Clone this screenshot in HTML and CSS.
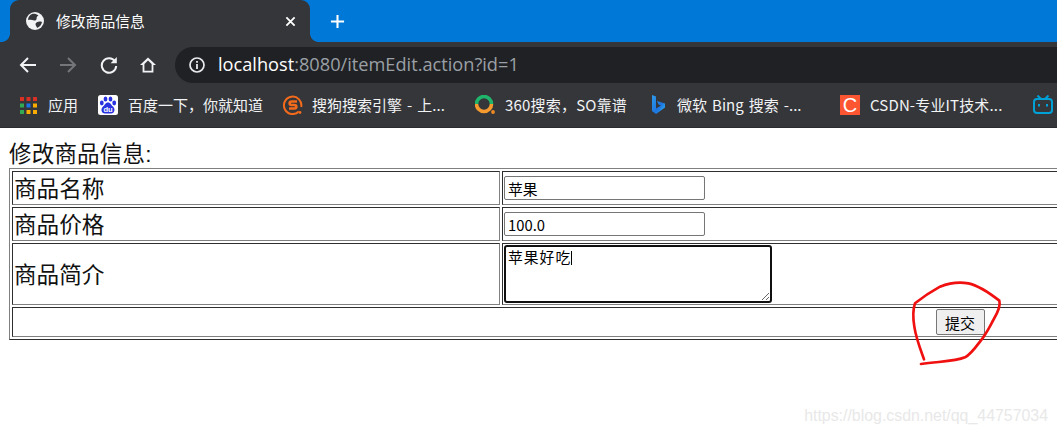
FILE: index.html
```html
<!DOCTYPE html>
<html lang="zh">
<head>
<meta charset="utf-8">
<title>修改商品信息</title>
<link rel="stylesheet" href="styles.css">
</head>
<body>
<header class="chrome">
  <div class="tabstrip">
    <div class="tab">
      <svg class="globe" viewBox="0 0 18 18"><circle cx="9" cy="9" r="9" fill="#f1f3f4"/><path d="M6 2C3.500 3.200 2 5.500 2 8C5 7 8 9.500 10 8C11.500 6.800 9.500 5 12.500 3.500C10.500 1.800 8 1.400 6 2Z M16 10C13 9 10 10 9.500 12C9.500 14 11 14.500 11 16C13.500 15 15.500 13 16 10Z" fill="#35363a"/></svg>
      <span class="tab-title">修改商品信息</span>
      <svg class="tab-close" viewBox="0 0 12 12"><path d="M1.500 1.500 10.500 10.500 M10.500 1.500 1.500 10.500" stroke="#fff" stroke-width="2"/></svg>
    </div>
    <svg class="new-tab" viewBox="0 0 16 16"><path d="M8 1V15M1 8H15" stroke="#fff" stroke-width="2.200"/></svg>
  </div>
  <div class="toolbar">
    <svg class="nav nav-back" viewBox="0 0 18 18"><path d="M17 9H2 M9 2 2 9 9 16" fill="none" stroke="#f1f3f4" stroke-width="2"/></svg>
    <svg class="nav nav-forward" viewBox="0 0 18 18"><path d="M1 9H16 M9 2 16 9 9 16" fill="none" stroke="#74767a" stroke-width="2"/></svg>
    <svg class="nav nav-reload" viewBox="0 0 18 18"><path d="M15 5.500A7.200 7.200 0 1 0 16.200 10" fill="none" stroke="#f1f3f4" stroke-width="2"/><path d="M16.800 1V7.200H10.600Z" fill="#f1f3f4"/></svg>
    <svg class="nav nav-home" viewBox="0 0 18 18"><path d="M9 1.500 1 9H3.600V16.500H14.400V9H17Z M5.400 8 9 4.500 12.600 8V14.700H5.400Z" fill="#f1f3f4" fill-rule="evenodd"/></svg>
    <div class="omnibox">
      <svg class="info" viewBox="0 0 16 16"><circle cx="8" cy="8" r="7" fill="none" stroke="#e8eaed" stroke-width="1.700"/><path d="M8 7V12 M8 4V5.800" stroke="#e8eaed" stroke-width="1.800"/></svg>
      <span class="url"><span class="host">localhost</span>:8080/itemEdit.action?id=1</span>
    </div>
  </div>
  <nav class="bookmarks">
    <a class="bm bm-apps">
      <svg class="ico" viewBox="0 0 17 17"><g fill="#d93025"><rect width="4" height="4"/><rect x="6.500" width="4" height="4"/><rect x="13" width="4" height="4"/></g><g fill="#34a853"><rect y="6.500" width="4" height="4"/><rect y="13" width="4" height="4"/></g><rect x="6.500" y="6.500" width="4" height="4" fill="#1a73e8"/><g fill="#f9ab00"><rect x="13" y="6.500" width="4" height="4"/><rect x="6.500" y="13" width="4" height="4"/><rect x="13" y="13" width="4" height="4"/></g></svg>
      <span class="bm-text">应用</span>
    </a>
    <a class="bm bm-baidu">
      <svg class="ico-lg" viewBox="0 0 20 20"><rect width="20" height="20" rx="2.500" fill="#fff"/><g fill="#2932e1"><ellipse cx="3.800" cy="8" rx="1.900" ry="2.400"/><ellipse cx="7.500" cy="4" rx="1.900" ry="2.500"/><ellipse cx="12.500" cy="4" rx="1.900" ry="2.500"/><ellipse cx="16.200" cy="8" rx="1.900" ry="2.400"/><path d="M10 7.500C7.500 7.500 7 10 5 11.500 2.500 13.500 3 18.500 7 18.500H13C17 18.500 17.500 13.500 15 11.500 13 10 12.500 7.500 10 7.500Z"/></g><text x="10" y="16.800" class="du">du</text></svg>
      <span class="bm-text">百度一下，你就知道</span>
    </a>
    <a class="bm bm-sogou">
      <svg class="ico-sogou" viewBox="0 0 20 20"><path d="M15.800 16.500A8.700 8.700 0 1 1 18.200 12" fill="none" stroke="#f26a1b" stroke-width="2"/><circle cx="17" cy="17.500" r="1.400" fill="#f26a1b"/><path d="M14 6.500H8.500C6 6.500 6 10 8.500 10H11.500C14 10 14 13.500 11.500 13.500H6" fill="none" stroke="#f26a1b" stroke-width="2.600"/></svg>
      <span class="bm-text sp-word">搜狗搜索引擎 - 上...</span>
    </a>
    <a class="bm bm-360">
      <svg class="ico-lg" viewBox="0 0 20 20"><path d="M1.500 9A7.500 7.500 0 0 1 16.500 9" fill="none" stroke="#1fb56a" stroke-width="3.600"/><path d="M1.500 9A7.500 7.500 0 0 0 16.500 9" fill="none" stroke="#f59a2e" stroke-width="3.600"/><circle cx="18" cy="17" r="1.900" fill="#f08a24"/></svg>
      <span class="bm-text sp-360">360搜索，SO靠谱</span>
    </a>
    <a class="bm bm-bing">
      <svg class="ico-bing" viewBox="0 0 13 20"><defs><linearGradient id="bingFill" x1="0" y1="0" x2="1" y2="1"><stop offset="0" stop-color="#2f9be8"/><stop offset="0.600" stop-color="#1c74e0"/><stop offset="1" stop-color="#35c1f1"/></linearGradient></defs><path d="M0 0 4 1.500V13.500L9 10.500 6.500 9.500 5 6 13 8.500V12.500L4 19 0 16Z" fill="url(#bingFill)"/></svg>
      <span class="bm-text sp-word">微软 Bing 搜索 -...</span>
    </a>
    <a class="bm bm-csdn">
      <span class="csdn-ico">C</span>
      <span class="bm-text sp-csdn">CSDN-专业IT技术...</span>
    </a>
    <a class="bm">
      <svg class="ico-lg" viewBox="0 0 20 20"><path d="M4.500 0.500 8 4 M15.500 0.500 12 4" stroke="#00a1d6" stroke-width="2"/><rect x="1" y="4" width="18" height="14" rx="3" fill="none" stroke="#00a1d6" stroke-width="2"/><path d="M6 9V11.500 M14 9V11.500" stroke="#00a1d6" stroke-width="2"/></svg>
    </a>
  </nav>
</header>
<main class="page">
  <form class="edit-form">
    <div class="form-title">修改商品信息:</div>
    <table class="edit-table" border="1">
      <tbody>
        <tr>
          <td class="label">商品名称</td>
          <td class="field"><input class="text-input" type="text" value="苹果"></td>
        </tr>
        <tr>
          <td class="label">商品价格</td>
          <td class="field"><input class="text-input" type="text" value="100.0"></td>
        </tr>
        <tr>
          <td class="label">商品简介</td>
          <td class="field"><textarea class="text-area">苹果好吃</textarea><span class="caret"></span></td>
        </tr>
        <tr>
          <td class="submit-cell" colspan="2"><button class="submit" type="button">提交</button></td>
        </tr>
      </tbody>
    </table>
  </form>
  <svg class="scribble" viewBox="0 0 531 480"><path d="M132 268C122 240 108 205 103 170C99 145 98 120 105 100C120 88 140 72 180 50C205 40 240 36 265 40C295 46 330 70 358 92C362 105 355 125 340 150C330 168 320 190 300 215C285 235 270 255 255 262C225 275 180 274 123 282" fill="none" stroke="#f01010" stroke-width="8" stroke-linecap="round" stroke-linejoin="round"/></svg>
  <div class="watermark">https://blog.csdn.net/qq_44757034</div>
</main>
</body>
</html>
```

FILE: styles.css
```css
html, body {
  margin: 0;
  padding: 0;
  width: 1057px;
  height: 433px;
  overflow: hidden;
  background: #fff;
}

.chrome {
  font-family: "Noto Sans CJK SC", "Noto Sans", sans-serif;
  color: #f1f3f4;
}

.tabstrip {
  height: 42px;
  background: #0078d7;
  display: flex;
  align-items: flex-end;
  padding-left: 10px;
}

.tab {
  position: relative;
  width: 300px;
  height: 42px;
  box-sizing: border-box;
  background: #35363a;
  border-radius: 9px 9px 0 0;
  display: flex;
  align-items: center;
  padding: 0 14px 0 16px;
}

.tab::before,
.tab::after {
  content: "";
  position: absolute;
  bottom: 0;
  width: 8px;
  height: 8px;
}

.tab::before {
  left: -8px;
  background: radial-gradient(circle at 0 0, #0078d7 7.500px, #35363a 8px);
}

.tab::after {
  right: -8px;
  background: radial-gradient(circle at 100% 0, #0078d7 7.500px, #35363a 8px);
}

.globe {
  width: 18px;
  height: 18px;
  flex: none;
}

.tab-title {
  margin-left: 12px;
  padding-bottom: 2px;
  font-size: 14.800px;
  flex: 1;
  color: #fff;
}

.tab-close {
  width: 11px;
  height: 11px;
}

.new-tab {
  width: 15px;
  height: 15px;
  margin: 0 0 13px 20px;
}

.toolbar {
  height: 41px;
  padding-top: 5px;
  box-sizing: border-box;
  background: #35363a;
  display: flex;
  align-items: center;
}

.nav {
  width: 18px;
  height: 18px;
  flex: none;
}

.nav-back { margin: 0 22px 0 19px; }
.nav-forward { margin-right: 23px; }
.nav-reload { margin-right: 21px; }
.nav-home { margin-right: 18px; }

.omnibox {
  flex: 1;
  height: 36px;
  background: #202124;
  border-radius: 18px 0 0 18px;
  display: flex;
  align-items: center;
  padding-left: 14px;
}

.info {
  width: 16px;
  height: 16px;
}

.url {
  margin-left: 13px;
  padding-bottom: 2px;
  font-family: "Open Sans", sans-serif;
  font-size: 18.200px;
  color: #9aa0a6;
  white-space: nowrap;
}

.host {
  color: #fff;
}

.bookmarks {
  height: 45px;
  background: #35363a;
  border-bottom: 1px solid #2a2b2e;
  box-sizing: border-box;
  display: flex;
  align-items: center;
  padding-left: 20px;
  font-size: 15px;
  color: #f1f3f4;
  white-space: nowrap;
}

.bm {
  display: flex;
  align-items: center;
  flex: none;
}

.bm-text {
  padding-bottom: 2px;
}

.bm-apps { width: 78px; }
.bm-baidu { width: 185px; }
.bm-sogou { width: 192px; }
.bm-360 { width: 177px; }
.bm-bing { width: 188px; }
.bm-csdn { width: 193px; }

.ico {
  width: 17px;
  height: 17px;
  margin-right: 11px;
}

.ico-lg {
  width: 20px;
  height: 20px;
  margin-right: 10px;
}

.ico-sogou {
  width: 20px;
  height: 20px;
  margin-right: 9px;
}

.ico-bing {
  width: 13px;
  height: 20px;
  margin-right: 12px;
}

.sp-word { word-spacing: 1.700px; }
.sp-360 { letter-spacing: 0.200px; }
.sp-csdn { letter-spacing: 0.150px; }

.du {
  font-family: "Liberation Sans", sans-serif;
  font-size: 7.500px;
  font-weight: 700;
  fill: #fff;
  text-anchor: middle;
}

.csdn-ico {
  width: 20px;
  height: 20px;
  margin-right: 10px;
  background: #fc5531;
  color: #fff;
  font: 20px/20px "Liberation Sans", sans-serif;
  text-align: center;
}

.page {
  position: relative;
  height: 305px;
  padding: 13px 0 0 9px;
  box-sizing: border-box;
  font-family: "Noto Sans CJK SC", "Liberation Sans", sans-serif;
  color: #111;
}

.form-title {
  font-size: 22.500px;
  line-height: 27px;
  letter-spacing: 0.200px;
  font-family: "Liberation Sans", "Noto Sans CJK SC", sans-serif;
}

.edit-table {
  width: 1902px;
  table-layout: fixed;
  border-spacing: 2px;
  border-collapse: separate;
  border: 1px solid;
  border-color: #808080 #2e2e2e #2e2e2e #808080;
}

.edit-table td {
  border: 1px solid;
  border-color: #2e2e2e #808080 #808080 #2e2e2e;
  padding: 1px;
}

.label {
  width: 484px;
  font-size: 22.600px;
  line-height: 30px;
}

.field {
  font-size: 0;
}

.text-input {
  width: 201px;
  height: 24px;
  box-sizing: border-box;
  margin: 2px 0;
  padding: 1px 3px;
  border: 1px solid #767676;
  border-radius: 2px;
  font: 14.800px "Noto Sans CJK SC", "Liberation Sans", sans-serif;
  color: #000;
  background: #fff;
  vertical-align: top;
}

.text-area {
  display: inline-block;
  width: 268px;
  height: 58px;
  box-sizing: border-box;
  margin: 0;
  padding: 0 2px;
  border: 2px solid #101010;
  border-radius: 3px;
  font: 14.800px/20px "Noto Sans CJK SC", sans-serif;
  letter-spacing: 1px;
  color: #000;
  vertical-align: top;
  outline: none;
}

.caret {
  position: absolute;
  left: 571px;
  top: 123px;
  width: 1px;
  height: 14px;
  background: #000;
}

.submit-cell {
  height: 26px;
  text-align: center;
}

.submit {
  width: 49px;
  height: 26px;
  padding: 0;
  border: 1px solid #767676;
  border-radius: 2px;
  background: #efefef;
  color: #000;
  font: 15px "Noto Sans CJK SC", sans-serif;
  vertical-align: top;
}

.scribble {
  position: absolute;
  left: 880px;
  top: 142px;
  width: 177px;
  height: 160px;
}

.watermark {
  position: absolute;
  right: 9px;
  bottom: 8px;
  font: 15.900px "Liberation Sans", sans-serif;
  color: #e8e8e8;
  white-space: nowrap;
}
```
